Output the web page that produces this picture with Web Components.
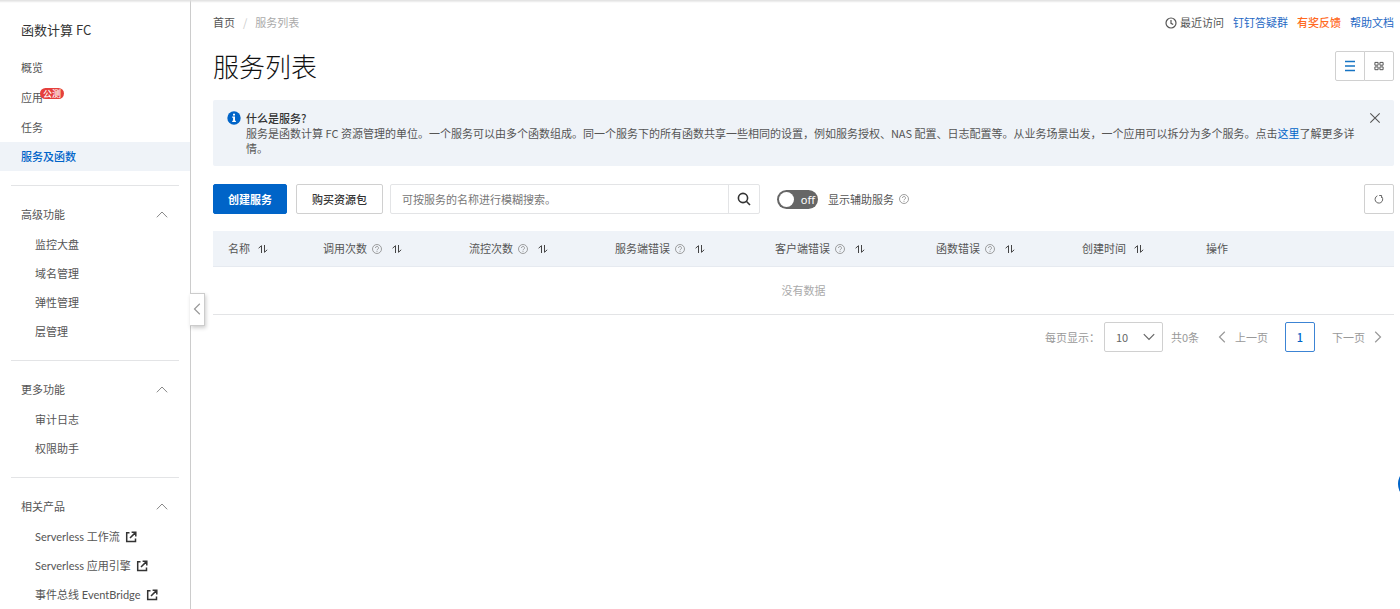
<!DOCTYPE html>
<html lang="zh-CN">
<head>
<meta charset="utf-8">
<meta name="viewport" content="width=device-width, initial-scale=1">
<title>服务列表 - 函数计算 FC</title>
<style>
  html, body { margin: 0; }
  body {
    --blue: #0064c8;
    --link: #2468c4;
    --text: #555;
    --strong: #333;
    --muted: #aaa;
    --line: #e3e4e6;
    --control: #d0d0d0;
    --tint: #eff3f8;
    font: 11px/15px "Noto Sans CJK SC", "Noto Sans", sans-serif;
    color: var(--text);
    background: #fff;
  }
</style>
</head>
<body>
<fc-shell>
  <fc-sidebar slot="side" heading="函数计算 FC">
    <fc-nav-item>概览</fc-nav-item>
    <fc-nav-item badge="公测">应用</fc-nav-item>
    <fc-nav-item>任务</fc-nav-item>
    <fc-nav-item active>服务及函数</fc-nav-item>
    <fc-nav-group heading="高级功能">
      <fc-nav-item nested>监控大盘</fc-nav-item>
      <fc-nav-item nested>域名管理</fc-nav-item>
      <fc-nav-item nested>弹性管理</fc-nav-item>
      <fc-nav-item nested>层管理</fc-nav-item>
    </fc-nav-group>
    <fc-nav-group heading="更多功能">
      <fc-nav-item nested>审计日志</fc-nav-item>
      <fc-nav-item nested>权限助手</fc-nav-item>
    </fc-nav-group>
    <fc-nav-group heading="相关产品">
      <fc-nav-item nested external>Serverless 工作流</fc-nav-item>
      <fc-nav-item nested external>Serverless 应用引擎</fc-nav-item>
      <fc-nav-item nested external>事件总线 EventBridge</fc-nav-item>
    </fc-nav-group>
  </fc-sidebar>
  <fc-topbar></fc-topbar>
  <fc-page-title>服务列表</fc-page-title>
  <fc-notice heading="什么是服务?">服务是函数计算 FC 资源管理的单位。一个服务可以由多个函数组成。同一个服务下的所有函数共享一些相同的设置，例如服务授权、NAS 配置、日志配置等。从业务场景出发，一个应用可以拆分为多个服务。点击<a href="#help">这里</a>了解更多详情。</fc-notice>
  <fc-toolbar></fc-toolbar>
  <fc-service-table></fc-service-table>
  <fc-pagination></fc-pagination>
</fc-shell>

<script>
const define = (name, render) => customElements.define(name, class extends HTMLElement {
  connectedCallback() {
    if (this.shadowRoot) return;
    const t = document.createElement('template');
    t.innerHTML = '<style>*{box-sizing:border-box}a{color:inherit;text-decoration:none}button,input,select{font:inherit;color:inherit;margin:0}button{cursor:pointer}</style>' + render(this);
    this.attachShadow({ mode: 'open' }).append(t.content.cloneNode(true));
  }
});

const stroke = (w, h, body, sw = 1) =>
  `<svg width="${w}" height="${h}" viewBox="0 0 ${w} ${h}" fill="none" stroke="currentColor" stroke-width="${sw}" aria-hidden="true">${body}</svg>`;
const icons = {
  up: stroke(12, 8, '<path d="M.8 6.3 6 1l5.2 5.3"/>'),
  down: stroke(12, 8, '<path d="M.8 1.2 6 6.5l5.2-5.3"/>', 1.2),
  left: stroke(8, 12, '<path d="M6.8.8 1.5 6l5.3 5.2"/>', 1.2),
  right: stroke(8, 12, '<path d="M1.2.8 6.5 6l-5.3 5.2"/>', 1.2),
  external: stroke(12, 12, '<path d="M4.5 1.7H1.7v8.8h8.8V7.6M6.6 1.2h4.2v4.2M10.4 1.6 5 7"/>', 1.5),
  clock: stroke(12, 12, '<circle cx="6" cy="6" r="5"/><path d="M6 3v3.3l2.2 1.3"/>', 1.2),
  list: stroke(12, 12, '<path d="M1 1.5h10M1 6h10M1 10.5h10"/>', 1.5),
  grid: stroke(10, 10, '<path d="M.9 1.4h3.2v2.8H.9zM5.9 1.4h3.2v2.8H5.9zM.9 5.9h3.2v2.8H.9zM5.9 5.9h3.2v2.8H5.9z"/>'),
  info: '<svg width="14" height="14" viewBox="0 0 14 14" aria-hidden="true"><circle cx="7" cy="7" r="6.7" fill="#0064c8"/><path fill="#fff" d="M6 2.8h2v1.7H6zM5.2 5.6H8v4.2h.9V11H5.2V9.8h.9v-3h-.9z"/></svg>',
  close: stroke(12, 12, '<path d="m1.3 1.3 9.4 9.4M10.7 1.3l-9.4 9.4"/>', 1.1),
  search: stroke(14, 14, '<circle cx="6" cy="6" r="4.6"/><path d="m9.3 9.3 3.7 3.7"/>', 1.6),
  help: stroke(10, 10, '<circle cx="5" cy="5" r="4.5" stroke-width=".8"/><path d="M3.5 4a1.5 1.5 0 1 1 2.3 1.2c-.5.4-.8.5-.8 1.1M5 7v.9" stroke-width=".8"/>'),
  refresh: stroke(10, 10, '<path d="M3.4 1.8A3.8 3.8 0 1 0 8 3.1M5.2 1.5h2.4v2.4"/>', .9),
  sort: stroke(10, 10, '<path d="M.6 4.2 3.5 1.7V9M6.5 1v7.3L9.2 5.8" stroke-width="1"/>')
};
define('fc-icon', el => `<style>:host{display:inline-flex;flex:none}svg{display:block}</style>${icons[el.getAttribute('name')]}`);

define('fc-shell', () => `<style>
  :host { display: flex; height: 100vh; min-width: 1100px; }
  .side { position: relative; flex: none; width: 191px; border-right: 1px solid #ccc; }
  .handle { position: absolute; left: 100%; top: 50%; transform: translateY(-12px); display: flex; align-items: center; justify-content: center; width: 15px; height: 33px; padding: 0; color: #999; background: #fff; border: 1px solid #ccc; border-left: 0; box-shadow: 1px 2px 4px #0003; }
  main { flex: 1; min-width: 0; padding: 0 6px 0 22px; }
  .edge { position: fixed; inset: 0 0 auto; height: 3px; background: linear-gradient(#dedede, #fff0); }
  .chat { position: fixed; left: calc(100% - 2px); bottom: 108px; width: 34px; height: 34px; padding: 0; border: 0; border-radius: 50%; background: var(--blue); }
</style>
<div class="side"><slot name="side"></slot><button class="handle" aria-label="收起导航"><fc-icon name="left"></fc-icon></button></div>
<main><slot></slot></main>
<div class="edge"></div><button class="chat" aria-label="在线咨询"></button>`);

define('fc-sidebar', el => `<style>
  :host { display: block; height: 100vh; overflow-y: auto; scrollbar-width: none; }
  h2 { margin: 0; padding: 20px 21px 13px; font-size: 13px; line-height: 20px; font-weight: 400; color: var(--strong); }
</style><h2>${el.getAttribute('heading')}</h2><nav><slot></slot></nav>`);

define('fc-nav-group', el => `<style>
  :host { display: block; padding-bottom: 14px; }
  :host::before { content: ""; display: block; height: 1px; margin: 0 11px 13px; background: var(--line); }
  button { display: flex; align-items: center; justify-content: space-between; width: 100%; height: 31px; padding: 0 22px 0 21px; border: 0; background: none; }
  fc-icon { color: #888; }
</style><button aria-expanded="true">${el.getAttribute('heading')}<fc-icon name="up"></fc-icon></button><slot></slot>`);

define('fc-nav-item', el => `<style>
  :host { display: block; }
  :host([active]) { margin-bottom: 14px; background: var(--tint); color: var(--blue); font-weight: 500; }
  :host([external]) { font-family: Lato, "Noto Sans CJK SC", sans-serif; }
  a { display: flex; align-items: center; height: 29px; padding-left: 21px; }
  :host([nested]) a { padding-left: 35px; }
  :host([badge]) a { height: 31px; }
  .badge { align-self: flex-start; margin: 6px 0 0 -3px; padding: 0 3px; border-radius: 6px; font-size: 9px; line-height: 11px; font-weight: 500; color: #fff; background: #e5403c; }
  fc-icon { margin-left: 5px; color: #333; }
</style><a href="#"><span><slot></slot></span>${el.hasAttribute('badge') ? `<span class="badge">${el.getAttribute('badge')}</span>` : ''}${el.hasAttribute('external') ? '<fc-icon name="external"></fc-icon>' : ''}</a>`);

define('fc-topbar', () => `<style>
  :host { display: flex; justify-content: space-between; align-items: center; height: 45px; }
  nav { display: flex; gap: 8px; }
  .links { gap: 9px; color: var(--link); }
  .here { color: var(--muted); }
  .sep { color: #ccc; }
  .recent { display: flex; align-items: center; gap: 3px; color: var(--text); }
  .hot { color: #ff6a1f; font-weight: 500; }
</style>
<nav aria-label="面包屑"><a href="#">首页</a><span class="sep">/</span><span class="here">服务列表</span></nav>
<nav class="links"><a class="recent" href="#"><fc-icon name="clock"></fc-icon>最近访问</a><a href="#">钉钉答疑群</a><a class="hot" href="#">有奖反馈</a><a href="#">帮助文档</a></nav>`);

define('fc-page-title', () => `<style>
  :host { display: flex; justify-content: space-between; align-items: center; height: 42px; }
  h1 { margin: 0; font-size: 26px; line-height: 36px; font-weight: 300; color: #111; }
  .views { display: flex; }
  button { display: flex; align-items: center; justify-content: center; width: 30px; height: 30px; padding: 0; border: 1px solid var(--control); border-radius: 2px 0 0 2px; background: #fff; }
  button + button { margin-left: -1px; border-radius: 0 2px 2px 0; }
  .on { color: #1674c4; }
</style><h1><slot></slot></h1>
<div class="views"><button class="on" aria-label="列表视图"><fc-icon name="list"></fc-icon></button><button aria-label="卡片视图"><fc-icon name="grid"></fc-icon></button></div>`);

define('fc-notice', el => `<style>
  :host { display: flex; align-items: flex-start; margin-top: 13px; padding: 11px 13px 10px 14px; border-radius: 2px; background: var(--tint); }
  .body { flex: 1; margin: 0 9px 0 5px; }
  h3 { margin: 0; font: inherit; font-weight: 500; color: var(--strong); }
  p { margin: 0; }
  ::slotted(a) { color: var(--blue); text-decoration: none; }
  button { display: flex; padding: 1px 0; border: 0; background: none; }
</style><fc-icon name="info"></fc-icon>
<div class="body"><h3>${el.getAttribute('heading')}</h3><p><slot></slot></p></div>
<button aria-label="关闭"><fc-icon name="close"></fc-icon></button>`);

define('fc-toolbar', () => `<style>
  :host { display: flex; align-items: center; margin: 18px 0 17px; }
  .btn { height: 30px; margin-right: 9px; padding: 0 14px; border: 1px solid var(--control); border-radius: 2px; background: #fff; color: var(--strong); font-weight: 500; }
  .btn + .btn { margin-right: 7px; padding: 0 15px; }
  .primary { border-color: var(--blue); background: var(--blue); color: #fff; font-weight: 700; }
  form { display: flex; width: 370px; height: 30px; border: 1px solid var(--line); border-radius: 2px; }
  input[type=search] { flex: 1; min-width: 0; padding: 0 11px; border: 0; outline: 0; background: none; appearance: none; }
  input::placeholder { color: #777; opacity: 1; }
  form button { display: flex; align-items: center; justify-content: center; width: 31px; padding: 0; border: 0; border-left: 1px solid var(--line); background: none; color: #333; }
  label { display: flex; align-items: center; margin: 0 5px 0 17px; }
  .switch { position: relative; display: flex; align-items: center; margin-right: 10px; }
  .switch input { appearance: none; width: 41px; height: 19px; border-radius: 10px; background: #666; }
  .switch input::before { content: ""; display: block; width: 15px; height: 15px; margin: 2px; border-radius: 50%; background: #fff; }
  .switch span { position: absolute; right: 3px; font-family: "Noto Sans", sans-serif; color: #fff; }
  .reload { display: flex; align-items: center; justify-content: center; width: 30px; height: 30px; margin-left: auto; padding: 0; border: 1px solid var(--control); border-radius: 2px; background: #fff; }
  .q { color: #888; }
</style>
<button class="btn primary">创建服务</button><button class="btn">购买资源包</button>
<form role="search"><input type="search" aria-label="搜索服务" placeholder="可按服务的名称进行模糊搜索。"><button type="button" aria-label="搜索"><fc-icon name="search"></fc-icon></button></form>
<label><span class="switch"><input type="checkbox" role="switch"><span>off</span></span>显示辅助服务</label><fc-icon class="q" name="help"></fc-icon>
<button class="reload" aria-label="刷新"><fc-icon name="refresh"></fc-icon></button>`);

const columns = [
  ['名称', 95, 's'], ['调用次数', 146, 'hs'], ['流控次数', 146, 'hs'], ['服务端错误', 160, 'hs'],
  ['客户端错误', 161, 'hs'], ['函数错误', 146, 'hs'], ['创建时间', 124, 's'], ['操作', 203, '']
];
define('fc-service-table', () => `<style>
  :host { display: block; }
  table { width: 100%; table-layout: fixed; border-collapse: separate; border-spacing: 0; }
  th { height: 36px; padding: 0 0 0 15px; text-align: left; font-weight: 400; background: var(--tint); border-bottom: 1px solid #e6eaf0; }
  th div { display: flex; align-items: center; }
  .q { margin-left: 5px; color: #888; }
  .sort { margin-left: 8px; padding: 0; border: 0; background: none; display: flex; color: #444; }
  .q + .sort { margin-left: 10px; }
  td { height: 48px; padding: 0; text-align: center; color: var(--muted); border-bottom: 1px solid var(--line); }
</style>
<table><colgroup>${columns.map(c => `<col style="width:${c[1]}px">`).join('')}</colgroup>
<thead><tr>${columns.map(([n, , f]) => `<th scope="col"><div>${n}${f.includes('h') ? '<fc-icon class="q" name="help"></fc-icon>' : ''}${f.includes('s') ? `<button class="sort" aria-label="按${n}排序"><fc-icon name="sort"></fc-icon></button>` : ''}</div></th>`).join('')}</tr></thead>
<tbody><tr><td colspan="8">没有数据</td></tr></tbody></table>`);

define('fc-pagination', () => `<style>
  :host { display: flex; align-items: center; justify-content: flex-end; margin-top: 7px; color: #999; }
  label { display: flex; align-items: center; gap: 4px; }
  .pick { position: relative; display: flex; align-items: center; color: #666; }
  select { width: 59px; height: 30px; padding: 0 11px; border: 1px solid var(--control); border-radius: 2px; appearance: none; background: #fff; }
  .pick fc-icon { position: absolute; right: 8px; pointer-events: none; }
  .total { margin: 0 19px 0 8px; }
  button { display: flex; align-items: center; gap: 9px; height: 30px; padding: 0; border: 0; background: none; }
  .page { justify-content: center; width: 30px; margin: 0 17px; border: 1px solid #3c84d4; border-radius: 2px; color: var(--blue); font-weight: 500; }
  .next { margin-right: 12px; }
</style>
<label>每页显示：<span class="pick"><select><option>10</option><option>20</option><option>50</option></select><fc-icon name="down"></fc-icon></span></label>
<span class="total">共0条</span>
<button><fc-icon name="left"></fc-icon>上一页</button>
<button class="page" aria-current="page">1</button>
<button class="next">下一页<fc-icon name="right"></fc-icon></button>`);
</script>
</body>
</html>
